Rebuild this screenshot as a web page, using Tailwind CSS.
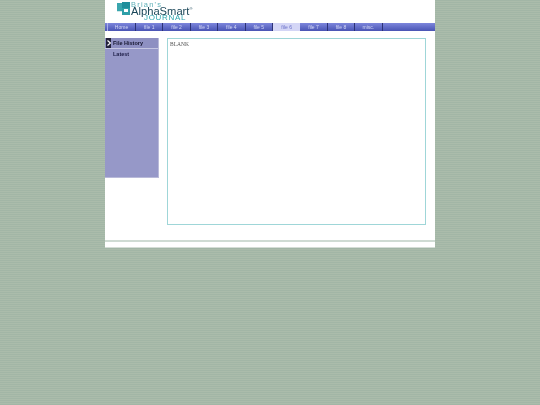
<!DOCTYPE html>
<html lang="en">
<head>
  <meta charset="UTF-8" />
  <title>Brian's AlphaSmart Journal</title>
  <script src="https://cdn.jsdelivr.net/npm/@tailwindcss/browser@4"></script>
</head>
<body class="h-[405px] overflow-hidden bg-[#a6b9a8] bg-[repeating-linear-gradient(180deg,#a2b6a6_0px,#a2b6a6_1px,#abbcab_1px,#abbcab_2px)] font-['Liberation_Sans',sans-serif]">

  <div class="mx-auto w-[330px] h-[248px] bg-white border-b border-[#d5ddd6]">

    <!-- Logo -->
    <div class="h-[23px] pl-[12px] flex items-start">
      <svg class="w-[14px] h-[13px] mt-[2px] shrink-0" viewBox="0 0 14 13">
        <rect x="0" y="1" width="8" height="8" fill="#3aa6ae"/>
        <rect x="5" y="0" width="8" height="6" fill="#1f8f9c"/>
        <rect x="5" y="6" width="8" height="7" fill="#2f9fa8"/>
        <rect x="7" y="7" width="4" height="3" fill="#fff"/>
        <rect x="0" y="9" width="5" height="1" fill="#cfe9ea"/>
      </svg>
      <div class="relative w-[64px] h-[23px] will-change-transform">
        <div class="absolute left-[0px] top-[1px] text-[7.5px] leading-[7px] tracking-[1.2px] text-[#5fb0b8]">Brian's</div>
        <div class="absolute left-0 top-[6px] text-[11.2px] leading-[10px] text-[#1a4658]">AlphaSmart<span class="text-[4px] align-super leading-[0]">®</span></div>
        <div class="absolute left-[13px] top-[15px] text-[8px] leading-[6px] tracking-[0.7px] text-[#2ea5ae]">JOURNAL</div>
      </div>
    </div>

    <!-- Nav -->
    <div class="h-[8px] pl-[2px] flex bg-gradient-to-b from-[#7d86dc] to-[#4a54b4] will-change-transform">
      <div class="w-[29px] border-r border-l border-r-[#2c3276] border-l-[#a9aeea] text-center text-[5px] leading-[8px] text-[#d4d8f5]">Home</div>
      <div class="w-[27.4px] border-r border-[#2c3276] text-center text-[5px] leading-[8px] text-[#d4d8f5]">file 1</div>
      <div class="w-[27.4px] border-r border-[#2c3276] text-center text-[5px] leading-[8px] text-[#d4d8f5]">file 2</div>
      <div class="w-[27.4px] border-r border-[#2c3276] text-center text-[5px] leading-[8px] text-[#d4d8f5]">file 3</div>
      <div class="w-[27.4px] border-r border-[#2c3276] text-center text-[5px] leading-[8px] text-[#d4d8f5]">file 4</div>
      <div class="w-[27.4px] border-r border-[#2c3276] text-center text-[5px] leading-[8px] text-[#d4d8f5]">file 5</div>
      <div class="w-[27.4px] bg-[#d4d6f6] text-center text-[5px] leading-[8px] text-[#6a70c8]">file 6</div>
      <div class="w-[27.4px] border-r border-[#2c3276] text-center text-[5px] leading-[8px] text-[#d4d8f5]">file 7</div>
      <div class="w-[27.4px] border-r border-[#2c3276] text-center text-[5px] leading-[8px] text-[#d4d8f5]">file 8</div>
      <div class="w-[27.4px] border-r border-[#2c3276] text-center text-[5px] leading-[8px] text-[#d4d8f5]">misc.</div>
    </div>

    <!-- Sidebar and content -->
    <div class="flex mt-[7px]">
      <div class="w-[54px] h-[140px] bg-[#9698c8] border-r border-b border-[#b9bad9] will-change-transform">
        <div class="h-[11px] flex items-center bg-[#8e90c2] border-b border-[#c5c6e2]">
          <div class="ml-[1px] w-[5px] h-[10px] bg-[#22223a] flex items-center justify-center">
            <svg class="w-[4px] h-[6px]" viewBox="0 0 4 6"><path d="M0.5 0.5 L3.5 3 L0.5 5.5" fill="none" stroke="#fff" stroke-width="1.2"/></svg>
          </div>
          <span class="ml-[2px] text-[5.5px] leading-[10px] font-bold text-[#15152e]">File History</span>
        </div>
        <div class="h-[10px] pl-[8px] text-[5.5px] leading-[10px] font-bold text-[#20204a]">Latest</div>
      </div>
      <div class="ml-[8px] w-[259px] h-[187px] border border-[#9fd6d8] px-[2px] py-[2px]">
        <div class="text-[5.5px] leading-[7px] font-['Liberation_Serif',serif] text-[#555] will-change-transform">BLANK</div>
      </div>
    </div>

    <!-- Footer rule -->
    <div class="mt-[15px] h-[2px] bg-[#cfdbd3]"></div>
  </div>

</body>
</html>
